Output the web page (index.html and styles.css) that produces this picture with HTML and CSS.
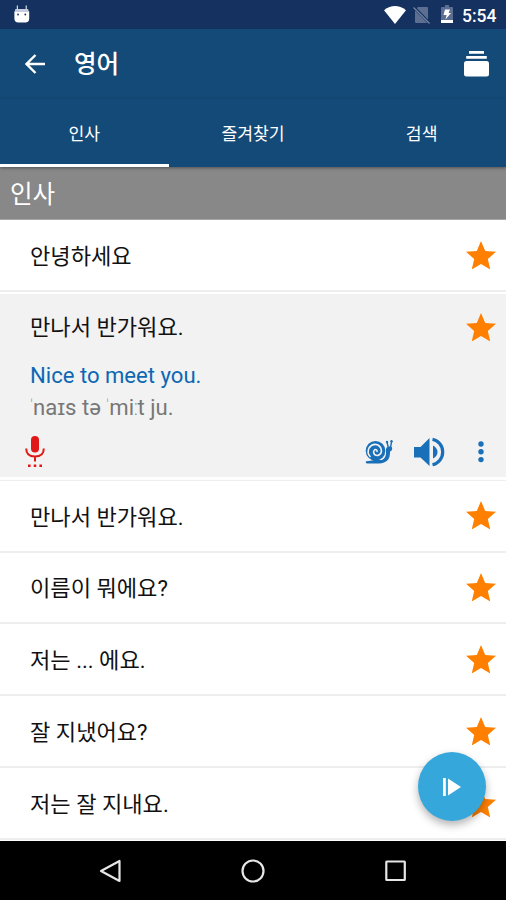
FILE: index.html
```html
<!DOCTYPE html>
<html lang="ko">
<head>
<meta charset="utf-8">
<title>영어</title>
<link rel="stylesheet" href="styles.css">
</head>
<body>
<svg width="0" height="0" class="defs"><symbol id="star" viewBox="2 2 20 19"><path d="M12 17.270L18.180 21l-1.640-7.030L22 9.240l-7.190-.61L12 2 9.190 8.630 2 9.240l5.460 4.730L5.820 21z"/></symbol></svg>
<div class="screen">
  <header class="status">
    <svg class="droid" viewBox="0 0 16 18"><path d="M3.3 0.5v4M12.2 0.5v4" stroke="#fff" stroke-width="1"/><path d="M1 5q0-1 1-1h11.500q1 0 1 1v1H1z" fill="#c5cbe0"/><path d="M.4 6.300h14.800v7.200q0 4-4 4H4.400q-4 0-4-4z" fill="#fff"/><circle cx="4" cy="9.500" r=".9" fill="#14315f"/><circle cx="11.300" cy="9.500" r=".9" fill="#14315f"/></svg>
    <svg class="wifi" viewBox="0 0 22 18"><path d="M0 4.200Q11-4 22 4.200L11 18z" fill="#fff"/></svg>
    <svg class="sim" viewBox="0 0 17 18"><path d="M5 1h9q1 0 1 1v14q0 1-1 1H3q-1 0-1-1V4z" fill="#5c6f92"/><path d="M0 .5l17 17" stroke="#14315f" stroke-width="3"/><path d="M.5 1.500l16 16" stroke="#7585a3" stroke-width="1.300"/></svg>
    <svg class="battery" viewBox="0 0 12 19"><path d="M4 0h4v2h3q1 0 1 1v12H0V3q0-1 1-1h3z" fill="#5c6f92"/><path d="M0 15h12v3H0z" fill="#fff"/><path d="M4 4.500h5L7.600 8H10l-5.500 6.500L5.600 10H2.500z" fill="#fff"/></svg>
    <span class="clock">5:54</span>
  </header>
  <div class="toolbar">
    <svg class="back" viewBox="0 0 20 20"><path d="M20 10H1.500M10.500 1L1.500 10l9 9" fill="none" stroke="#fff" stroke-width="2.400"/></svg>
    <h1>영어</h1>
    <svg class="cards" viewBox="0 0 25 26"><path d="M5 0h15v2.700H5zM2.200 5h20.600v2.700H2.200z" fill="#fff"/><rect y="10" width="25" height="15.500" rx="2.500" fill="#fff"/></svg>
  </div>
  <nav class="tabs"><span class="tab active">인사</span><span class="tab">즐겨찾기</span><span class="tab">검색</span></nav>
  <h2>인사</h2>
  <main>
    <div class="row"><span>안녕하세요</span><svg class="star"><use href="#star"/></svg></div>
    <section class="open">
      <div class="row"><span>만나서 반가워요.</span><svg class="star"><use href="#star"/></svg></div>
      <p class="english">Nice to meet you.</p>
      <p class="ipa"><span class="mark">ˈ</span>naɪs tə <span class="mark">ˈ</span>mi<span class="mark long">ː</span>t ju.</p>
      <div class="actions">
        <svg class="mic" viewBox="0 0 20 32"><rect x="6" y="0" width="8" height="16.500" rx="4"/><path d="M1.200 12.500q0 8 8.800 8t8.800-8M10 20v5.500" fill="none" stroke="#e01818" stroke-width="2"/><path d="M3 28.500h2.600v2.600H3zM8.700 28.500h2.600v2.600H8.700zM14.400 28.500H17v2.600h-2.600z"/></svg>
        <svg class="snail" viewBox="0 0 28 24"><path d="M1 21.300Q6 21 9 20H17Q21 18 21 13V9.500Q21 7 24 6.500Q28 6 27 9.500Q26.500 11.500 25 11.500Q25.500 23 14 23.500H2Q0 23 1 21.300z"/><circle cx="10.500" cy="10.800" r="9.800"/><path d="M5.500 17Q1.500 13 4 8Q7.500 3 13 5Q17.500 8 16 13Q13.500 17 9.500 14.500Q7.500 11.500 10 9.500Q12.500 9.500 12 12" fill="none" stroke="#f2f2f2" stroke-width="1.600"/><path d="M23.300 7.500L22 2M25.500 7.500L26.700 1" fill="none" stroke="#1a70b8" stroke-width="1.400"/><circle cx="22" cy="2" r="1.200"/><circle cx="26.500" cy="1.300" r="1.200"/></svg>
        <svg class="speaker" viewBox="0 0 31 30"><path d="M0 10h6.500L15.500 1v28L6.500 20.500H0zM19 8.500Q23.500 11 23.500 15T19 21.500z"/><path d="M18.500 2.300A13 13 0 0 1 18.500 27.700" fill="none" stroke="#1a70b8" stroke-width="3.200"/></svg>
        <svg class="more" viewBox="0 0 6 22"><circle cx="3" cy="3" r="2.700"/><circle cx="3" cy="10.800" r="2.700"/><circle cx="3" cy="18.600" r="2.700"/></svg>
      </div>
    </section>
    <div class="row"><span>만나서 반가워요.</span><svg class="star"><use href="#star"/></svg></div>
    <div class="row"><span>이름이 뭐에요?</span><svg class="star"><use href="#star"/></svg></div>
    <div class="row"><span>저는 ... 에요.</span><svg class="star"><use href="#star"/></svg></div>
    <div class="row"><span>잘 지냈어요?</span><svg class="star"><use href="#star"/></svg></div>
    <div class="row"><span>저는 잘 지내요.</span><svg class="star"><use href="#star"/></svg></div>
  </main>
  <button class="fab" aria-label="재생"><svg viewBox="0 0 18 18"><path d="M0 0h2.800v18H0zM5 .5L18 9 5 17.500z" fill="#fff"/></svg></button>
  <footer>
    <svg viewBox="0 0 24 24"><path d="M21.500 2v20L3 12z"/></svg>
    <svg viewBox="0 0 24 24"><circle cx="12" cy="12" r="10.500"/></svg>
    <svg viewBox="0 0 24 24"><rect x="2.300" y="2.500" width="18.500" height="18.500" rx=".5"/></svg>
  </footer>
</div>
</body>
</html>
```
FILE: styles.css
```css
* { box-sizing: border-box; }
body { margin: 0; font-family: Roboto, "Noto Sans CJK KR", sans-serif; }
h1, h2, p { margin: 0; font-weight: 400; }
svg { display: block; flex: none; }
.defs { position: absolute; }
.screen { position: relative; width: 506px; height: 900px; display: flex; flex-direction: column; overflow: hidden; background: #fff; }
.status { height: 29px; flex: none; background: #14315f; display: flex; align-items: center; padding: 0 10px 0 14px; }
.droid { width: 16px; height: 18px; margin-right: auto; margin-top: -2px; }
.wifi { width: 22px; height: 18px; }
.sim { width: 17px; height: 18px; margin-left: 7px; }
.battery { width: 12px; height: 19px; margin-left: 11px; }
.clock { width: 34px; margin-left: 9px; margin-top: 2px; color: #fff; font-size: 17.500px; font-weight: 500; line-height: 20px; white-space: nowrap; }
.toolbar { height: 70px; flex: none; background: #144a78; display: flex; align-items: center; padding: 0 17px 0 25px; }
.back { width: 20px; height: 20px; }
h1 { margin: 2px auto 0 29px; color: #fff; font-size: 24.500px; font-weight: 500; line-height: 36px; }
.cards { width: 25px; height: 26px; }
.tabs { height: 68px; flex: none; background: #144a78; display: flex; color: #fff; font-size: 17.200px; box-shadow: 0 1px 3px rgba(0,0,0,.4); position: relative; }
.tab { flex: 1; text-align: center; line-height: 70px; }
.active { border-bottom: 3px solid #fff; }
h2 { height: 53px; flex: none; background: #888; color: #fff; font-size: 24.500px; line-height: 56px; padding-left: 10px; border-bottom: 1px solid #a8a8a8; }
.row { height: 71.800px; display: flex; align-items: center; justify-content: space-between; padding: 2px 10px 0 30px; font-size: 22.100px; line-height: 32px; color: #111; border-bottom: 2px solid #eee; }
.star { width: 30px; height: 28.500px; margin-bottom: 2px; fill: #ff8000; }
.open { height: 188px; background: #f2f2f2; border: solid #fff; border-width: 2.500px 0 3px; }
.open .row { height: 65px; border: 0; }
.open .star { margin-bottom: 0; }
.open + .row { height: 72.800px; border-top: 1px solid #eee; }
.english, .ipa { padding-left: 30px; font-size: 22.100px; line-height: 32px; }
.english { color: #0c68b3; }
.ipa { color: #777; line-height: 33px; height: 33px; }
.mark { display: inline-block; width: 3px; transform: scaleX(.42); transform-origin: left; }
.long { width: 3.500px; transform: scaleX(.6); }
.actions { display: flex; align-items: center; height: 56px; padding: 0 22px 0 25px; fill: #1a70b8; }
.mic { width: 20px; height: 32px; fill: #e01818; margin-right: auto; }
.snail { width: 28px; height: 24px; }
.speaker { width: 31px; height: 30px; margin-left: 21px; }
.more { width: 6px; height: 22px; margin-left: 33px; }
.fab { position: absolute; left: 418px; top: 752px; width: 68px; height: 69px; border: 0; border-radius: 50%; padding: 0; background: #35a7da; display: flex; align-items: center; justify-content: center; box-shadow: 0 4px 8px rgba(0,0,0,.3); }
.fab svg { width: 18px; height: 18px; }
main { height: 621px; flex: none; overflow: hidden; }
footer { height: 59px; flex: none; background: #000; display: flex; align-items: center; justify-content: center; gap: 119px; }
footer svg { width: 24px; height: 24px; fill: none; stroke: #e6e6e6; stroke-width: 2.200; stroke-linejoin: round; }
```
